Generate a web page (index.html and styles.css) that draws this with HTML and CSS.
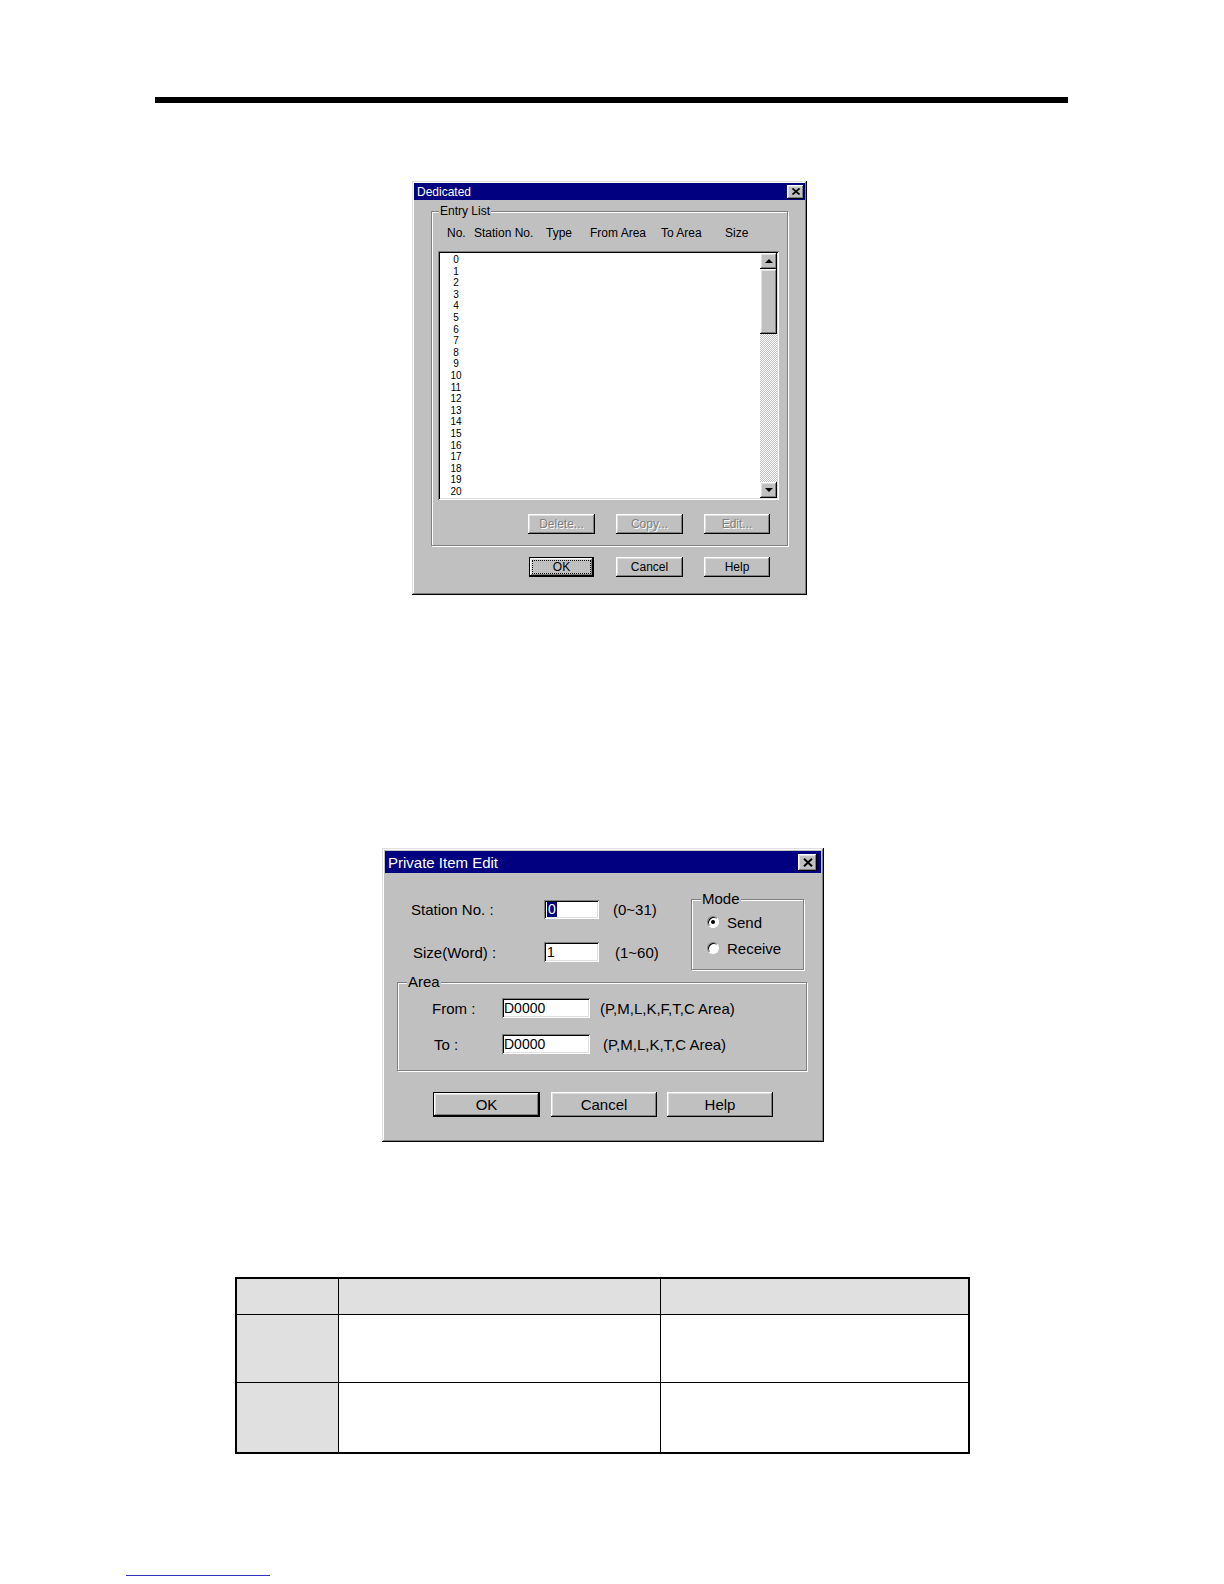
FILE: index.html
```html
<!DOCTYPE html>
<html>
<head>
<meta charset="utf-8">
<title>Dedicated</title>
<link rel="stylesheet" href="styles.css">
</head>
<body>
<div class="page">
  <div class="rule"></div>

  <div class="win win-ded">
    <div class="titlebar tb-ded">
      <span class="title">Dedicated</span>
      <span class="closebtn close-ded"><svg width="8" height="7" viewBox="0 0 8 7"><path d="M0.5 0.5 L7.5 6.5 M7.5 0.5 L0.5 6.5" stroke="#000" stroke-width="1.7" fill="none"/></svg></span>
    </div>
    <div class="group entry-group">
      <div class="legend leg-ded">Entry List</div>
      <div class="cols">
        <span class="c-no">No.</span><span class="c-st">Station No.</span><span class="c-ty">Type</span><span class="c-fr">From Area</span><span class="c-to">To Area</span><span class="c-sz">Size</span>
      </div>
      <div class="listbox">
        <div class="items">
          <div class="item">0</div><div class="item">1</div><div class="item">2</div><div class="item">3</div><div class="item">4</div><div class="item">5</div><div class="item">6</div><div class="item">7</div><div class="item">8</div><div class="item">9</div><div class="item">10</div><div class="item">11</div><div class="item">12</div><div class="item">13</div><div class="item">14</div><div class="item">15</div><div class="item">16</div><div class="item">17</div><div class="item">18</div><div class="item">19</div><div class="item">20</div>
        </div>
        <div class="vscroll">
          <div class="sbtn"><span class="tri-up"></span></div>
          <div class="thumb"></div>
          <div class="track"></div>
          <div class="sbtn"><span class="tri-down"></span></div>
        </div>
      </div>
      <div class="btnrow inner-btns">
        <div class="btn btn-s disabled w66">Delete...</div>
        <div class="btn btn-s disabled w66">Copy...</div>
        <div class="btn btn-s disabled w65">Edit...</div>
      </div>
    </div>
    <div class="btnrow main-btns">
      <div class="btn btn-s default w64"><span class="focus">OK</span></div>
      <div class="btn btn-s w66 g22">Cancel</div>
      <div class="btn btn-s w65 g21">Help</div>
    </div>
  </div>

  <div class="win win-pie">
    <div class="titlebar tb-pie">
      <span class="title">Private Item Edit</span>
      <span class="closebtn close-pie"><svg width="10" height="9" viewBox="0 0 10 9"><path d="M1 0.8 L9 8.2 M9 0.8 L1 8.2" stroke="#000" stroke-width="2" fill="none"/></svg></span>
    </div>
    <div class="pie-body">
      <div class="pie-top">
        <div class="pie-form">
          <div class="frow frow1">
            <span class="flabel fl1">Station No. :</span>
            <span class="field f-small"><span class="sel">0</span></span>
            <span class="hint h1">(0~31)</span>
          </div>
          <div class="frow frow2">
            <span class="flabel fl2">Size(Word) :</span>
            <span class="field f-small">1</span>
            <span class="hint h2">(1~60)</span>
          </div>
        </div>
        <div class="group mode-group">
          <div class="legend leg-pie">Mode</div>
          <div class="radio-row rr1"><span class="radio"><span class="dot"></span></span><span class="rlabel">Send</span></div>
          <div class="radio-row rr2"><span class="radio"></span><span class="rlabel">Receive</span></div>
        </div>
      </div>
      <div class="group area-group">
        <div class="legend leg-pie">Area</div>
        <div class="arow arow1">
          <span class="alabel al1">From :</span>
          <span class="field f-wide">D0000</span>
          <span class="hint ah1">(P,M,L,K,F,T,C Area)</span>
        </div>
        <div class="arow arow2">
          <span class="alabel al2">To :</span>
          <span class="field f-wide">D0000</span>
          <span class="hint ah2">(P,M,L,K,T,C Area)</span>
        </div>
      </div>
      <div class="pie-btns">
        <div class="btn btn-l default w107">OK</div>
        <div class="btn btn-l w106 g11">Cancel</div>
        <div class="btn btn-l w106 g10">Help</div>
      </div>
    </div>
  </div>

  <table class="grid">
    <tr class="r-head"><td class="k"></td><td class="m"></td><td class="n"></td></tr>
    <tr class="r-a"><td class="k shade"></td><td></td><td></td></tr>
    <tr class="r-b"><td class="k shade"></td><td></td><td></td></tr>
  </table>

  <div class="link-line"></div>
</div>
</body>
</html>
```

FILE: styles.css
```css
html, body {
  margin: 0;
  padding: 0;
  background: #fff;
}
body {
  font-family: "Liberation Sans", Arial, sans-serif;
  color: #000;
}
.page {
  width: 1224px;
  height: 1584px;
  padding-top: 97px;
  box-sizing: border-box;
  overflow: hidden;
}
.rule {
  margin-left: 155px;
  width: 913px;
  height: 6px;
  background: #000;
}

/* ---------- window chrome ---------- */
.win {
  background: #c0c0c0;
  box-sizing: border-box;
  box-shadow: inset -1px -1px 0 #000, inset 1px 1px 0 #dfdfdf,
              inset -2px -2px 0 #808080, inset 2px 2px 0 #fff;
}
.titlebar {
  background: #000080;
  color: #fff;
  display: flex;
  align-items: center;
  justify-content: space-between;
}
.closebtn {
  display: flex;
  align-items: center;
  justify-content: center;
  background: #c0c0c0;
  box-sizing: border-box;
  box-shadow: inset -1px -1px 0 #000, inset 1px 1px 0 #fff,
              inset -2px -2px 0 #808080, inset 2px 2px 0 #dfdfdf;
}
.btn {
  display: flex;
  align-items: center;
  justify-content: center;
  box-sizing: border-box;
  background: #c0c0c0;
  box-shadow: inset -1px -1px 0 #000, inset 1px 1px 0 #fff,
              inset -2px -2px 0 #808080, inset 2px 2px 0 #dfdfdf;
  white-space: nowrap;
}
.btn.default {
  box-shadow: inset 0 0 0 1px #000, inset -2px -2px 0 #000, inset 2px 2px 0 #fff,
              inset -3px -3px 0 #808080, inset 3px 3px 0 #dfdfdf;
}
.btn.disabled {
  color: #808080;
  text-shadow: 1px 1px 0 #fff;
}
.group {
  box-sizing: border-box;
  border: 1px solid #808080;
  box-shadow: inset 1px 1px 0 #fff, 1px 1px 0 #fff;
}
.legend {
  width: fit-content;
  background: #c0c0c0;
}
.field {
  display: flex;
  align-items: center;
  box-sizing: border-box;
  background: #fff;
  box-shadow: inset 1px 1px 0 #808080, inset -1px -1px 0 #fff,
              inset 2px 2px 0 #000, inset -2px -2px 0 #dfdfdf;
  font-size: 14px;
  padding-left: 3px;
}

/* ---------- Dedicated dialog ---------- */
.win-ded {
  margin-left: 412px;
  margin-top: 78px;
  width: 395px;
  height: 414px;
  padding: 2px;
  font-size: 12px;
}
.tb-ded {
  height: 17px;
  padding: 0 1px 0 3px;
  font-size: 12px;
}
.close-ded {
  width: 17px;
  height: 14px;
}
.entry-group {
  margin-top: 11px;
  margin-left: 17px;
  width: 357px;
  height: 335px;
}
.leg-ded {
  margin: -8px 0 0 7px;
  padding: 0 1px;
  height: 14px;
  line-height: 14px;
}
.cols {
  margin-top: 8px;
  padding-left: 15px;
  height: 14px;
  line-height: 14px;
  display: flex;
  white-space: nowrap;
}
.c-no { width: 27px; }
.c-st { width: 72px; }
.c-ty { width: 44px; }
.c-fr { width: 71px; }
.c-to { width: 64px; }
.c-sz { width: 30px; }
.listbox {
  margin-top: 11px;
  margin-left: 6px;
  width: 341px;
  height: 249px;
  box-sizing: border-box;
  padding: 2px;
  background: #fff;
  box-shadow: inset 1px 1px 0 #808080, inset -1px -1px 0 #fff,
              inset 2px 2px 0 #000, inset -2px -2px 0 #dfdfdf;
  display: flex;
}
.items {
  flex: 1;
  padding-left: 6px;
  padding-top: 1px;
}
.item {
  width: 20px;
  text-align: center;
  font-size: 10px;
  line-height: 11.6px;
  height: 11.6px;
}
.vscroll {
  width: 17px;
  display: flex;
  flex-direction: column;
}
.sbtn {
  height: 16px;
  flex: none;
  display: flex;
  align-items: center;
  justify-content: center;
  background: #c0c0c0;
  box-shadow: inset -1px -1px 0 #000, inset 1px 1px 0 #fff,
              inset -2px -2px 0 #808080, inset 2px 2px 0 #dfdfdf;
}
.tri-up {
  width: 0; height: 0;
  border-left: 4px solid transparent;
  border-right: 4px solid transparent;
  border-bottom: 4px solid #000;
}
.tri-down {
  width: 0; height: 0;
  border-left: 4px solid transparent;
  border-right: 4px solid transparent;
  border-top: 4px solid #000;
}
.thumb {
  height: 65px;
  flex: none;
  background: #c0c0c0;
  box-shadow: inset -1px -1px 0 #000, inset 1px 1px 0 #fff,
              inset -2px -2px 0 #808080, inset 2px 2px 0 #dfdfdf;
}
.track {
  flex: 1;
  background: repeating-conic-gradient(#c0c0c0 0 25%, #fff 0 50%) 0 0 / 2px 2px;
}
.btnrow {
  display: flex;
  justify-content: flex-end;
}
.inner-btns {
  margin-top: 14px;
  padding-right: 17px;
  gap: 21px;
}
.btn-s {
  height: 20px;
  font-size: 12px;
}
.main-btns {
  margin-top: 11px;
  padding-right: 35px;
}
.w64 { width: 65px; }
.w65 { width: 66px; }
.w66 { width: 67px; }
.g22 { margin-left: 22px; }
.g21 { margin-left: 21px; }
.focus {
  display: flex;
  align-items: center;
  justify-content: center;
  width: 57px;
  height: 12px;
  outline: 1px dotted #000;
}

/* ---------- Private Item Edit dialog ---------- */
.win-pie {
  margin-left: 382px;
  margin-top: 253px;
  width: 442px;
  height: 294px;
  padding: 3px;
  font-size: 15px;
}
.tb-pie {
  height: 22px;
  padding: 0 4px 0 3px;
  font-size: 15px;
}
.close-pie {
  width: 19px;
  height: 17px;
}
.pie-body {
  padding-left: 12px;
}
.pie-top {
  display: flex;
}
.pie-form {
  width: 294px;
}
.frow {
  display: flex;
  align-items: center;
  white-space: nowrap;
}
.frow1 { margin-top: 27px; height: 19px; }
.frow2 { margin-top: 23px; height: 20px; }
.fl1 { margin-left: 14px; width: 133px; }
.fl2 { margin-left: 16px; width: 131px; }
.f-small { width: 55px; height: 100%; }
.sel {
  background: #000080;
  color: #fff;
  padding: 0 1px;
  line-height: 15px;
}
.h1 { margin-left: 14px; }
.h2 { margin-left: 16px; }
.mode-group {
  margin-top: 26px;
  width: 113px;
  height: 71px;
}
.leg-pie {
  margin: -10px 0 0 9px;
  padding: 0 1px;
  height: 18px;
  line-height: 18px;
}
.radio-row {
  display: flex;
  align-items: center;
  height: 18px;
  padding-left: 15px;
}
.rr1 { margin-top: 5px; }
.rr2 { margin-top: 8px; }
.radio {
  width: 12px;
  height: 12px;
  box-sizing: border-box;
  border-radius: 50%;
  background: #fff;
  border: 1px solid;
  border-color: #808080 #fff #fff #808080;
  box-shadow: inset 1px 1px 0 #000;
  display: flex;
  align-items: center;
  justify-content: center;
}
.dot {
  width: 4px;
  height: 4px;
  border-radius: 50%;
  background: #000;
}
.rlabel { margin-left: 8px; }
.area-group {
  margin-top: 12px;
  width: 410px;
  height: 89px;
}
.arow {
  display: flex;
  align-items: center;
  height: 20px;
  white-space: nowrap;
}
.arow1 { margin-top: 7px; }
.arow2 { margin-top: 16px; }
.al1 { margin-left: 34px; width: 70px; }
.al2 { margin-left: 36px; width: 68px; }
.f-wide { width: 88px; height: 100%; padding-left: 2px; }
.ah1 { margin-left: 10px; }
.ah2 { margin-left: 13px; }
.pie-btns {
  display: flex;
  margin-top: 21px;
  margin-left: 36px;
}
.btn-l {
  height: 25px;
  font-size: 15px;
}
.w107 { width: 107px; }
.w106 { width: 106px; }
.g11 { margin-left: 11px; }
.g10 { margin-left: 10px; }

/* ---------- table ---------- */
.grid {
  margin-left: 235px;
  margin-top: 135px;
  width: 735px;
  border-collapse: collapse;
  border: 2px solid #000;
}
.grid td {
  border: 1px solid #000;
  padding: 0;
}
.grid .k { width: 101px; }
.grid .m { width: 321px; }
.r-head td { background: #e0e0e0; height: 35px; }
.r-a td { height: 67px; }
.r-b td { height: 69px; }
.grid td.shade { background: #e0e0e0; }

.link-line {
  margin-left: 126px;
  margin-top: 121px;
  width: 144px;
  height: 1px;
  background: #3030c0;
}
```
